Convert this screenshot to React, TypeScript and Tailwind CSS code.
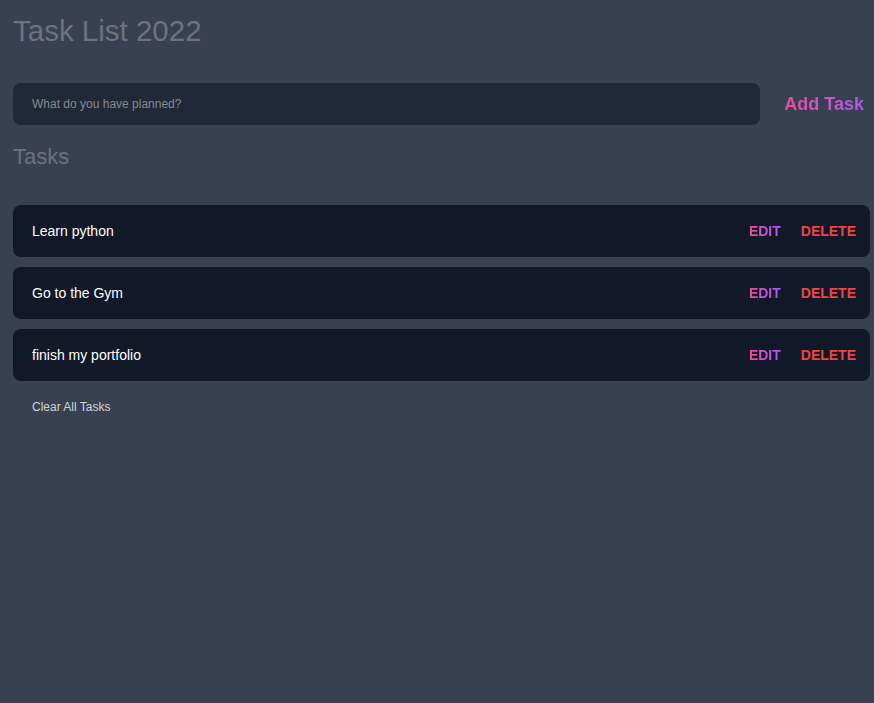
import { useState } from "react";

const initial = ["Learn python", "Go to the Gym", "finish my portfolio"];

export default function App() {
  const [tasks, setTasks] = useState(initial);
  const [text, setText] = useState("");

  const add = () => {
    if (!text.trim()) return;
    setTasks([...tasks, text.trim()]);
    setText("");
  };

  return (
    <div
      className="min-h-screen bg-[#374151] pl-[13px] pr-[4px] pt-[13px]"
      style={{ fontFamily: "'Liberation Sans', Arial, sans-serif" }}
    >
      <h1 className="text-[29.5px] leading-9 text-[#6b7280]">Task List 2022</h1>

      <div className="mt-[34px] flex items-center gap-6">
        <input
          value={text}
          onChange={(e) => setText(e.target.value)}
          placeholder="What do you have planned?"
          className="h-[42px] flex-1 rounded-lg bg-[#1f2937] px-[19px] text-xs text-white outline-none placeholder:text-[#858a92]"
        />
        <button
          onClick={add}
          className="bg-linear-to-r from-[#ec4899] to-[#a855f7] bg-clip-text pr-[6px] text-lg font-bold text-transparent"
        >
          Add Task
        </button>
      </div>

      <h2 className="mt-[18px] text-[22px] leading-7 text-[#6b7280]">Tasks</h2>

      <div className="mt-[34px] flex flex-col gap-[10px]">
        {tasks.map((t, i) => (
          <div key={i} className="flex h-[52px] items-center justify-between rounded-lg bg-[#111827] pl-[19px] pr-[14px]">
            <span className="text-sm text-white">{t}</span>
            <div className="flex items-center gap-5 text-sm font-bold">
              <button className="bg-linear-to-r from-[#ec4899] to-[#a855f7] bg-clip-text text-transparent">EDIT</button>
              <button
                onClick={() => setTasks(tasks.filter((_, j) => j !== i))}
                className="text-[#ef4444]"
              >
                DELETE
              </button>
            </div>
          </div>
        ))}
      </div>

      <button onClick={() => setTasks([])} className="mt-[18px] pl-[19px] text-xs leading-4 text-[#d1d5db]">
        Clear All Tasks
      </button>
    </div>
  );
}
